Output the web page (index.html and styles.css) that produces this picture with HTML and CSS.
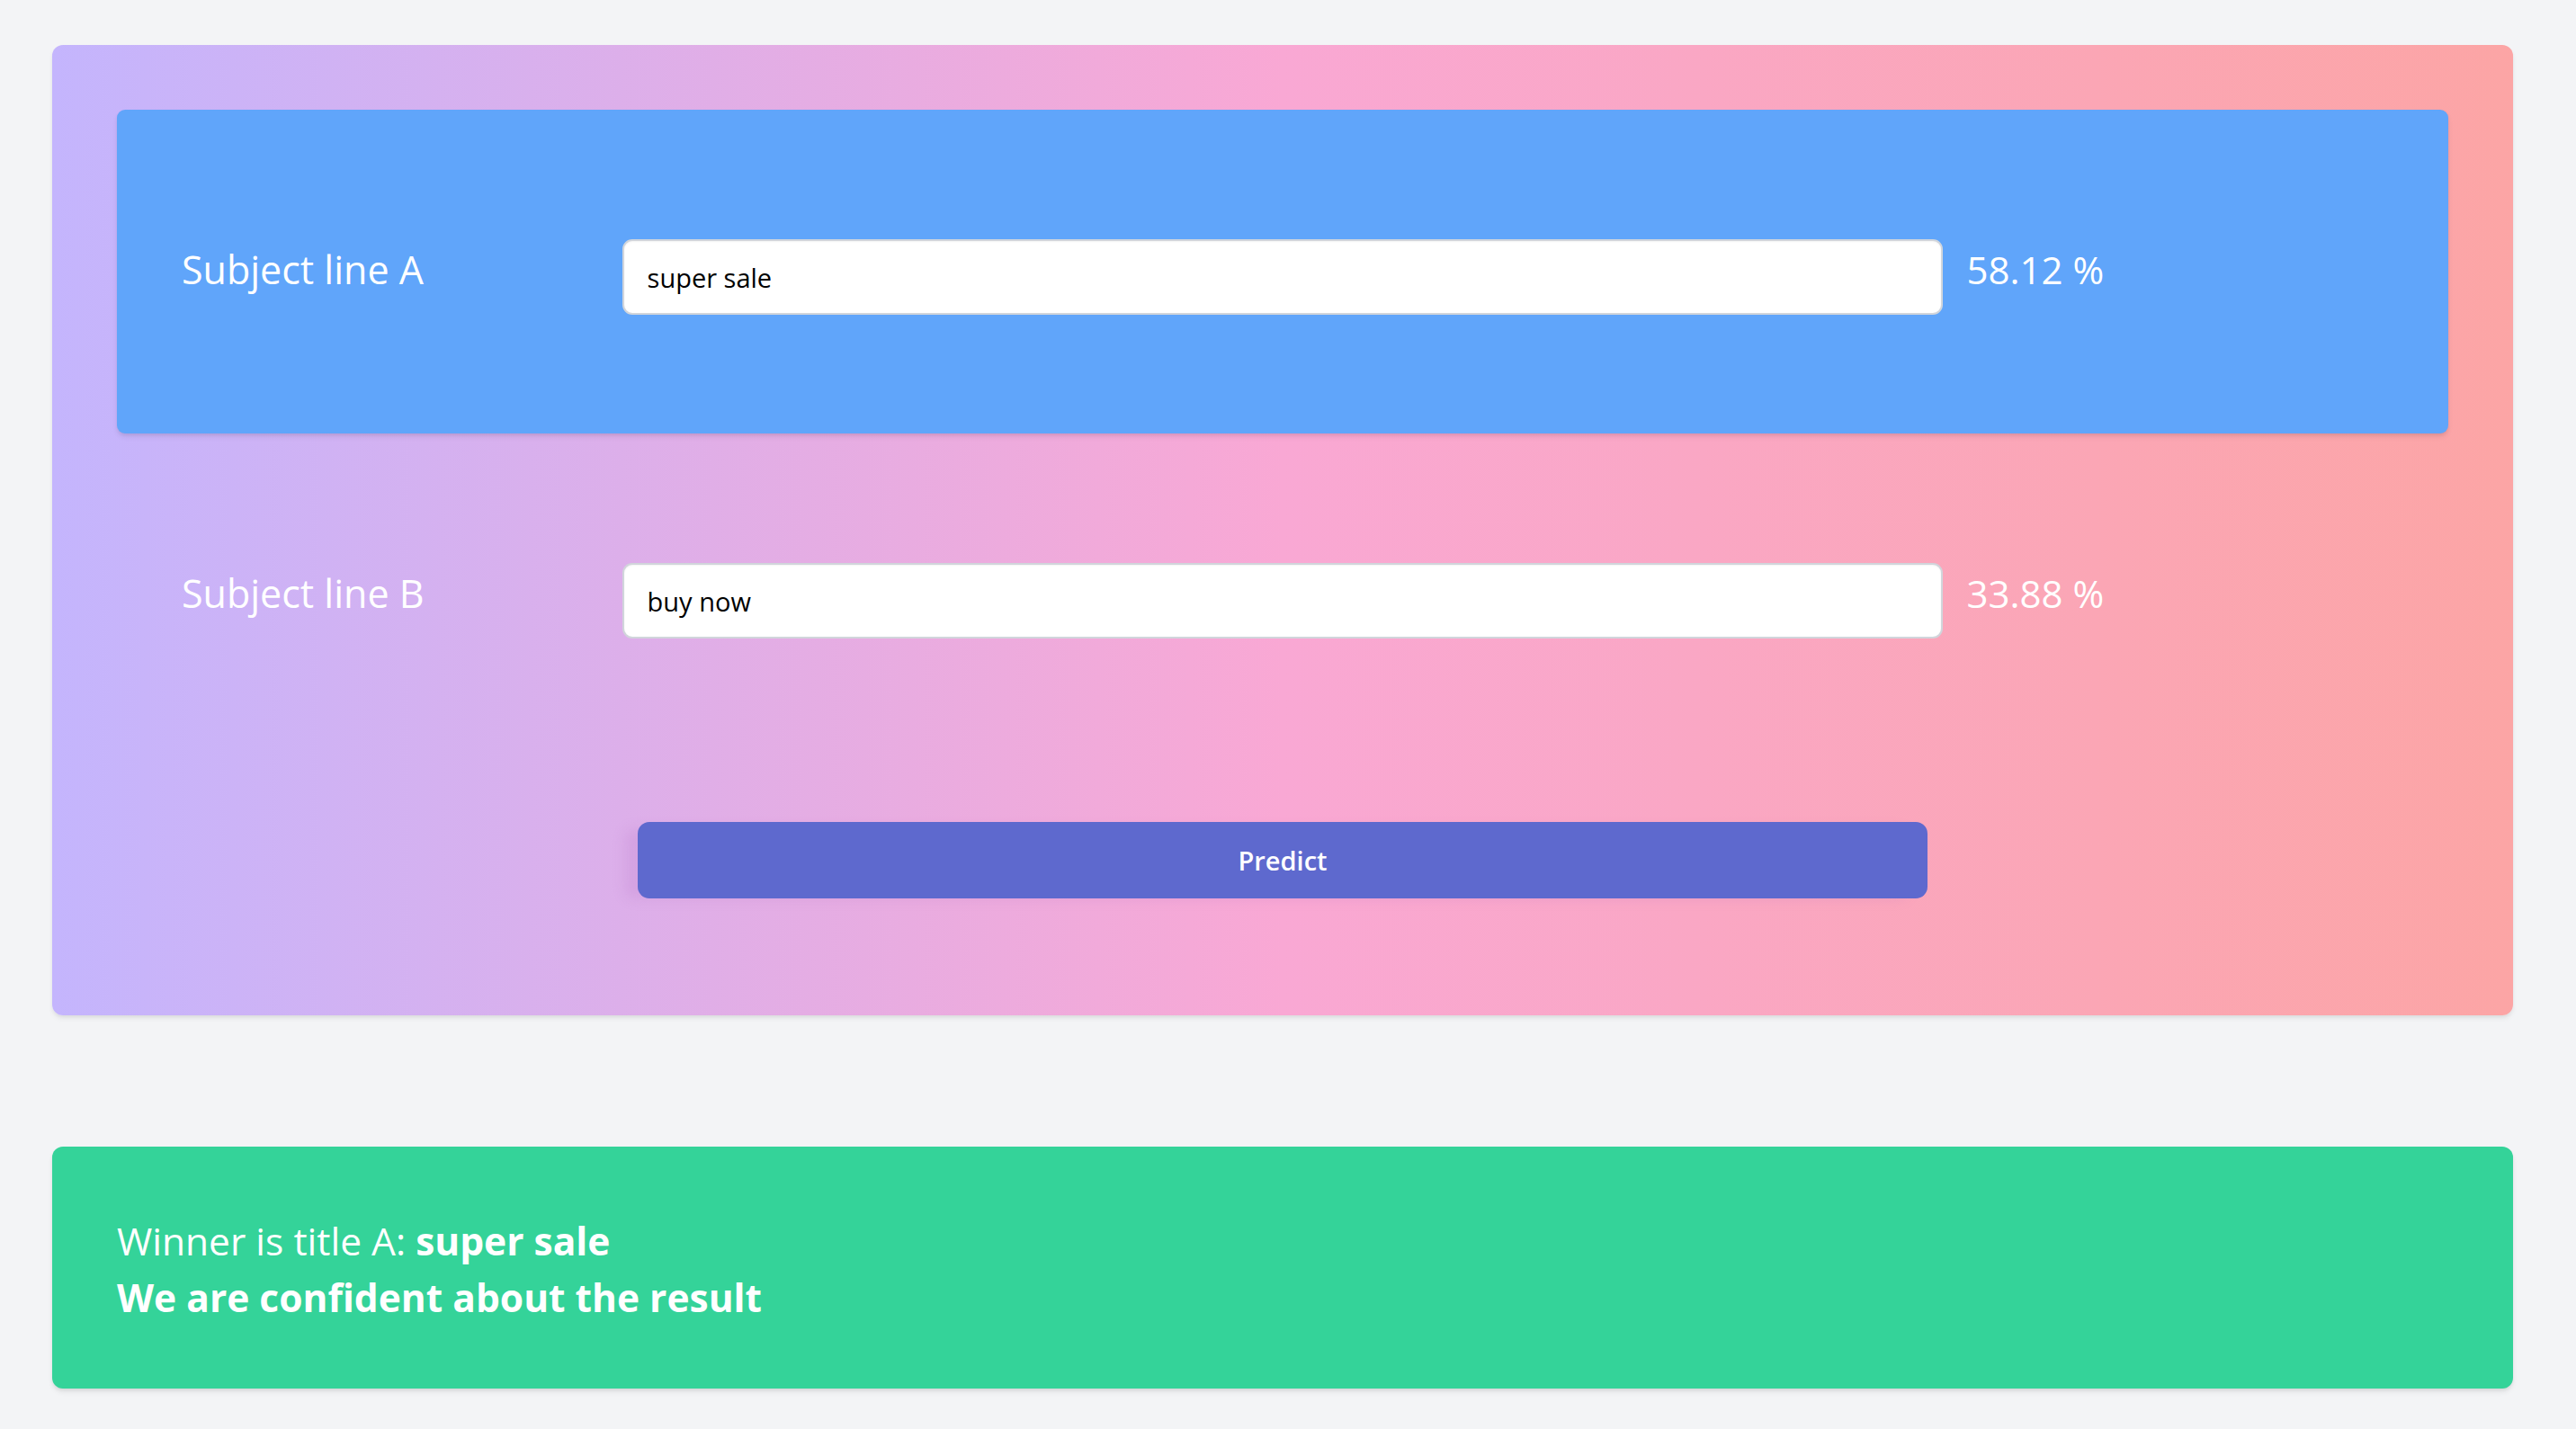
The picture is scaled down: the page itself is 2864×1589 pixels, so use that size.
FILE: index.html
```html
<!DOCTYPE html>
<html lang="en">
<head>
<meta charset="utf-8">
<title>Subject line predictor</title>
<link rel="stylesheet" href="styles.css">
</head>
<body>
<main class="page">
  <section class="card">
    <div class="row row-active">
      <label class="label" for="subject-a">Subject line A</label>
      <input class="field" id="subject-a" type="text" value="super sale">
      <span class="score">58.12 %</span>
    </div>
    <div class="row">
      <label class="label" for="subject-b">Subject line B</label>
      <input class="field" id="subject-b" type="text" value="buy now">
      <span class="score">33.88 %</span>
    </div>
    <div class="actions">
      <button class="predict" type="button">Predict</button>
    </div>
  </section>
  <section class="result">
    <p class="result-line">Winner is title A: <strong>super sale</strong></p>
    <p class="result-line result-strong">We are confident about the result</p>
  </section>
</main>
</body>
</html>
```

FILE: styles.css
```css
html, body {
  margin: 0;
  padding: 0;
}

body {
  background: #f3f4f6;
  font-family: "Open Sans", "Noto Sans", "Liberation Sans", sans-serif;
  color: #ffffff;
}

.page {
  padding: 50px 70px 45px 58px;
}

.card {
  border-radius: 12px;
  padding: 72px;
  background: linear-gradient(to right, #c4b5fd, #f9a8d4 50%, #fca5a5);
  box-shadow: 0 4px 6px -1px rgba(0, 0, 0, 0.08), 0 2px 4px -1px rgba(0, 0, 0, 0.05);
}

.row {
  box-sizing: border-box;
  height: 360px;
  padding: 0 72px;
  display: grid;
  grid-template-columns: repeat(5, 1fr);
  align-items: center;
  border-radius: 9px;
}

.row-active {
  background: #60a5fa;
  box-shadow: 0 4px 6px -1px rgba(0, 0, 0, 0.1), 0 2px 4px -1px rgba(0, 0, 0, 0.06);
}

.label {
  font-size: 43px;
  font-weight: 400;
  color: #ffffff;
  margin-bottom: 6px;
}

.field {
  grid-column: 2 / span 3;
  box-sizing: border-box;
  height: 84px;
  margin-top: 12px;
  padding: 0 26px;
  border: 2px solid #d1d5db;
  border-radius: 11px;
  background: #ffffff;
  font-family: "Open Sans", "Noto Sans", "Liberation Sans", sans-serif;
  font-size: 29px;
  color: #000000;
  outline: none;
  box-shadow: inset 0 1px 2px rgba(0, 0, 0, 0.05);
}

.score {
  padding-left: 26px;
  font-size: 42px;
  color: #ffffff;
  margin-bottom: 6px;
}

.actions {
  padding: 72px 72px 58px;
  display: grid;
  grid-template-columns: repeat(5, 1fr);
}

.predict {
  grid-column: 2 / span 3;
  margin: 0 17px;
  height: 85px;
  border: 0;
  border-radius: 13px;
  background: #5e69ce;
  color: #ffffff;
  font-family: "Open Sans", "Noto Sans", "Liberation Sans", sans-serif;
  font-size: 29px;
  font-weight: 600;
  cursor: pointer;
  box-shadow: -18px 4px 14px -4px rgba(180, 120, 200, 0.22);
}

.result {
  margin-top: 146px;
  padding: 74px 72px 70px;
  border-radius: 12px;
  background: #34d399;
  box-shadow: 0 4px 6px -1px rgba(0, 0, 0, 0.1), 0 2px 4px -1px rgba(0, 0, 0, 0.06);
}

.result-line {
  margin: 0;
  font-size: 42.5px;
  line-height: 62.5px;
  font-weight: 400;
}

.result-line strong,
.result-strong {
  font-weight: 700;
}
```
